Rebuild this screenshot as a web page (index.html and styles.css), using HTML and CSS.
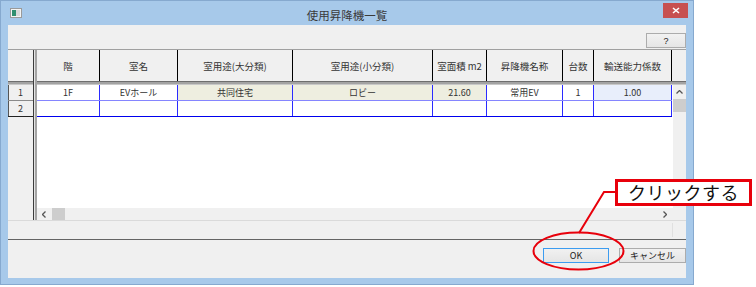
FILE: index.html
```html
<!DOCTYPE html>
<html lang="ja">
<head>
    <meta charset="UTF-8">
    <title>使用昇降機一覧</title>
    <link rel="stylesheet" href="styles.css">
</head>
<body>
<div class="window">
    <div class="titlebar">
        <svg class="app-icon" width="12" height="10" viewBox="0 0 12 10">
            <rect x="0.5" y="0.5" width="11" height="9" fill="#f4f4f4" stroke="#9a9a9a"/>
            <rect x="2" y="2" width="4" height="6" fill="#2f8f6f"/>
            <rect x="6" y="2" width="4" height="6" fill="#d8d8d8"/>
        </svg>
        <span class="title">使用昇降機一覧</span>
        <span class="close">
            <svg width="8" height="7" viewBox="0 0 8 7"><path d="M1 1 L7 6 M7 1 L1 6" stroke="#fff" stroke-width="1.6"/></svg>
        </span>
    </div>
    <div class="client">
        <div class="toolbar"><button class="help">?</button></div>
        <div class="grid">
            <div class="frozen">
                <div class="fz-head"></div>
                <div class="sep"></div>
                <div class="rowno">1</div>
                <div class="rowno last">2</div>
            </div>
            <div class="split"></div>
            <div class="main">
                <div class="head">
                    <div class="hc w1">階</div>
                    <div class="hc w2">室名</div>
                    <div class="hc w3">室用途(大分類)</div>
                    <div class="hc w4">室用途(小分類)</div>
                    <div class="hc w5">室面積 m2</div>
                    <div class="hc w6">昇降機名称</div>
                    <div class="hc w7">台数</div>
                    <div class="hc w8">輸送能力係数</div>
                    <div class="hc rest"></div>
                </div>
                <div class="sep"></div>
                <div class="body">
                    <div class="rows">
                        <div class="row">
                            <div class="cell w1">1F</div>
                            <div class="cell w2">EVホール</div>
                            <div class="cell w3 beige">共同住宅</div>
                            <div class="cell w4 beige">ロビー</div>
                            <div class="cell w5 beige">21.60</div>
                            <div class="cell w6">常用EV</div>
                            <div class="cell w7">1</div>
                            <div class="cell w8 pale">1.00</div>
                        </div>
                        <div class="row last">
                            <div class="cell w1"></div>
                            <div class="cell w2"></div>
                            <div class="cell w3"></div>
                            <div class="cell w4"></div>
                            <div class="cell w5"></div>
                            <div class="cell w6"></div>
                            <div class="cell w7"></div>
                            <div class="cell w8"></div>
                        </div>
                    </div>
                    <div class="vscroll">
                        <svg class="arrow-up" width="7" height="4" viewBox="0 0 7 4"><path d="M0.5 3.5 L3.5 0.5 L6.5 3.5" fill="none" stroke="#555" stroke-width="1.3"/></svg>
                        <span class="vthumb"></span>
                    </div>
                </div>
                <div class="hscroll">
                    <svg class="arrow-left" width="4" height="7" viewBox="0 0 4 7"><path d="M3.5 0.5 L0.5 3.5 L3.5 6.5" fill="none" stroke="#555" stroke-width="1.3"/></svg>
                    <span class="hthumb"></span>
                    <svg class="arrow-right" width="4" height="7" viewBox="0 0 4 7"><path d="M0.5 0.5 L3.5 3.5 L0.5 6.5" fill="none" stroke="#555" stroke-width="1.3"/></svg>
                </div>
            </div>
        </div>
        <div class="status"><span class="grip"></span></div>
        <div class="rule"></div>
        <div class="buttons">
            <button class="btn ok">OK</button>
            <button class="btn cancel">キャンセル</button>
        </div>
    </div>
</div>

<!-- 説明用の赤い囲み -->
<svg class="marks" width="756" height="287" viewBox="0 0 756 287">
    <ellipse cx="578.5" cy="251" rx="45" ry="18.5" fill="none" stroke="#e8000b" stroke-width="2"/>
    <polyline points="616,192 604,192 579,233" fill="none" stroke="#e8000b" stroke-width="2"/>
</svg>
<div class="callout">クリックする</div>
</body>
</html>
```

FILE: styles.css
```css
*{
    margin: 0;
    padding: 0;
    box-sizing: border-box;
}
body{
    width: 756px;
    height: 287px;
    background: #fff;
    font-family: "Noto Sans CJK JP", "Liberation Sans", sans-serif;
    overflow: hidden;
}
.window{
    width: 694px;
    height: 285px;
    border: 1px solid #86a9cf;
    background: #a7c9ea;
    display: flex;
    flex-direction: column;
}
.titlebar{
    height: 24px;
    display: grid;
    grid-template-columns: 1fr auto 1fr;
    align-items: start;
}
.app-icon{
    margin: 7px 0 0 9px;
}
.title{
    font-size: 11.5px;
    line-height: 20px;
    padding-top: 4px;
    color: #3a3a3a;
}
.close{
    justify-self: end;
    width: 25px;
    height: 15px;
    margin: 2px 5px 0 0;
    background: #c75050;
    display: flex;
    align-items: center;
    justify-content: center;
}
.client{
    height: 253px;
    margin: 0 7px;
    background: #f0f0f0;
    display: flex;
    flex-direction: column;
}
.toolbar{
    height: 24px;
    padding-top: 8px;
    display: flex;
    justify-content: flex-end;
}
.help{
    width: 40px;
    height: 15px;
    border: 1px solid #acacac;
    background: linear-gradient(#f2f2f2, #e5e5e5);
    font-family: "Liberation Sans", sans-serif;
    font-size: 9px;
    line-height: 12px;
    color: #222;
}
.grid{
    height: 171px;
    border-top: 1px solid #a0a0a0;
    display: flex;
}
.frozen{
    width: 25px;
    display: flex;
    flex-direction: column;
}
.fz-head{
    height: 31px;
}
.sep{
    height: 4px;
    background: #a3a3a3;
    border-top: 1px solid #6e6e6e;
    border-bottom: 1px solid #c8c8c8;
}
.rowno{
    height: 16px;
    border-bottom: 1px solid #8a8a8a;
    box-shadow: inset 1px 0 #555;
    font-size: 9px;
    line-height: 15px;
    text-align: center;
    color: #333;
}
.rowno.last{
    border-bottom-color: #222;
}
.split{
    width: 4px;
    background: linear-gradient(to right, #3c3c3c 0 1px, #e4e4e4 1px 2px, #a4a4a4 2px);
}
.main{
    flex: 1;
    min-width: 0;
    display: flex;
    flex-direction: column;
}
.head{
    height: 31px;
    display: flex;
}
.hc{
    border-right: 1px solid #000;
    font-size: 9.5px;
    color: #333;
    display: flex;
    align-items: center;
    justify-content: center;
    white-space: nowrap;
}
.hc.rest{
    flex: 1;
    border-right: 0;
}
.w1{ width: 63px; }
.w2{ width: 78px; }
.w3{ width: 115px; }
.w4{ width: 140px; }
.w5{ width: 54px; }
.w6{ width: 76px; }
.w7{ width: 31px; }
.w8{ width: 78px; }
.body{
    height: 123px;
    background: #fff;
    display: flex;
}
.rows{
    width: 635px;
}
.row{
    height: 16px;
    display: flex;
    border-bottom: 1px solid #8585ff;
}
.row.last{
    border-bottom-color: #0000ee;
}
.cell{
    border-right: 1px solid #2b2bff;
    font-size: 9px;
    color: #333;
    display: flex;
    align-items: center;
    justify-content: center;
    white-space: nowrap;
}
.beige{
    background: #eeeee0;
}
.pale{
    background: #e8eefb;
}
.vscroll{
    width: 13px;
    margin-left: 1px;
    background: #f0f0f0;
    display: flex;
    flex-direction: column;
    align-items: center;
}
.arrow-up{
    margin-top: 5px;
}
.vthumb{
    width: 13px;
    height: 13px;
    margin-top: 5px;
    background: #cdcdcd;
}
.hscroll{
    height: 12px;
    background: #f0f0f0;
    display: flex;
    align-items: center;
}
.arrow-left{
    margin-left: 5px;
}
.hthumb{
    width: 13px;
    height: 12px;
    margin-left: 6px;
    background: #cdcdcd;
}
.arrow-right{
    margin-left: 598px;
}
.status{
    height: 19px;
    border-top: 1px solid #dadada;
    display: flex;
    justify-content: flex-end;
    padding: 2px 0;
}
.grip{
    width: 14px;
    border-left: 1px solid #e0e0e0;
}
.rule{
    height: 1px;
    background: #646464;
}
.buttons{
    height: 38px;
    padding-top: 8px;
    display: flex;
    justify-content: flex-end;
    align-items: flex-start;
    gap: 10px;
}
.btn{
    width: 66px;
    height: 15px;
    border: 1px solid #acacac;
    background: linear-gradient(#f1f1f1, #e5e5e5);
    font-family: "Noto Sans CJK JP", "Liberation Sans", sans-serif;
    font-size: 9px;
    line-height: 12px;
    color: #222;
}
.btn.ok{
    border-color: #3c9cf0;
}
.btn.cancel{
    width: 67px;
}
.marks{
    position: absolute;
    left: 0;
    top: 0;
    pointer-events: none;
}
.callout{
    position: absolute;
    left: 615px;
    top: 179px;
    width: 137px;
    height: 27px;
    border: 3px solid #e8000b;
    background: #fff;
    font-size: 18px;
    font-weight: 400;
    line-height: 20px;
    text-align: center;
    color: #111;
    letter-spacing: 0.5px;
}
```
